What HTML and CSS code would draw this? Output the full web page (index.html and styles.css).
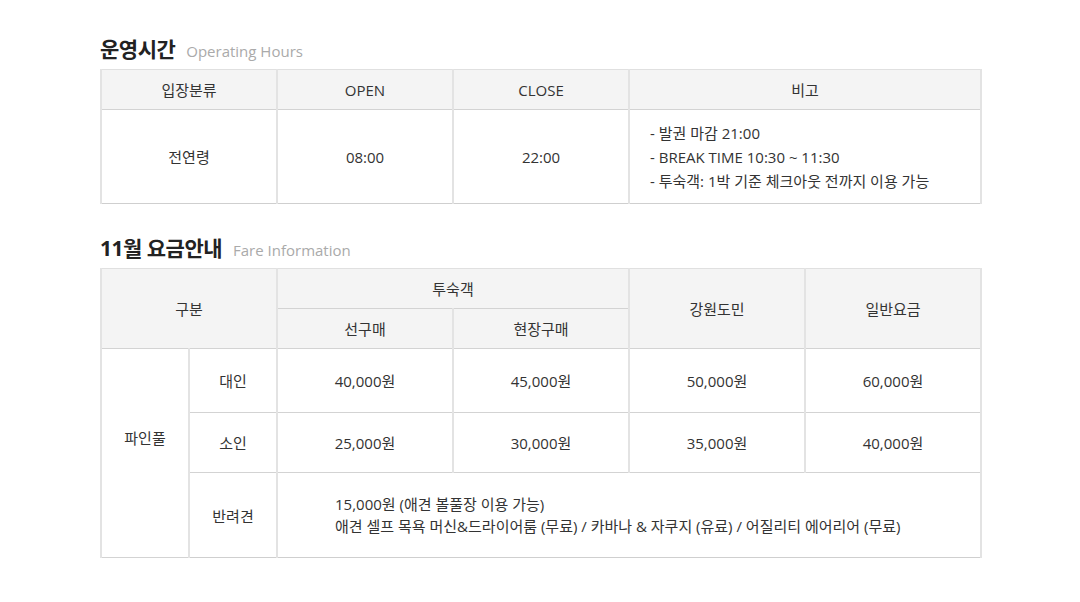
FILE: index.html
```html
<!DOCTYPE html>
<html lang="ko">
<head>
<meta charset="utf-8">
<link rel="stylesheet" href="styles.css">
</head>
<body>
<div class="wrap">
  <h2 class="title">운영시간 <span class="sub">Operating Hours</span></h2>
  <table class="tbl hours">
    <colgroup><col class="c176"><col class="c176"><col class="c176"><col class="c352"></colgroup>
    <thead>
      <tr><th>입장분류</th><th>OPEN</th><th>CLOSE</th><th>비고</th></tr>
    </thead>
    <tbody>
      <tr>
        <td>전연령</td>
        <td>08:00</td>
        <td>22:00</td>
        <td class="notes">
          <p>- 발권 마감 21:00</p>
          <p>- BREAK TIME 10:30 ~ 11:30</p>
          <p>- 투숙객: 1박 기준 체크아웃 전까지 이용 가능</p>
        </td>
      </tr>
    </tbody>
  </table>

  <h2 class="title t2">11월 요금안내 <span class="sub">Fare Information</span></h2>
  <table class="tbl fare">
    <colgroup><col class="c88"><col class="c88"><col class="c176"><col class="c176"><col class="c176"><col class="c176"></colgroup>
    <thead>
      <tr class="h1"><th colspan="2" rowspan="2">구분</th><th colspan="2">투숙객</th><th rowspan="2">강원도민</th><th rowspan="2">일반요금</th></tr>
      <tr class="h2"><th>선구매</th><th>현장구매</th></tr>
    </thead>
    <tbody>
      <tr class="r1"><td rowspan="3" class="pool">파인풀</td><td>대인</td><td>40,000원</td><td>45,000원</td><td>50,000원</td><td>60,000원</td></tr>
      <tr class="r2"><td>소인</td><td>25,000원</td><td>30,000원</td><td>35,000원</td><td>40,000원</td></tr>
      <tr class="r3"><td>반려견</td><td colspan="4" class="pet">
        <p>15,000원 (애견 볼풀장 이용 가능)</p>
        <p>애견 셀프 목욕 머신&amp;드라이어룸 (무료) / 카바나 &amp; 자쿠지 (유료) / 어질리티 에어리어 (무료)</p>
      </td></tr>
    </tbody>
  </table>
</div>
</body>
</html>
```
FILE: styles.css
```css
* { box-sizing: border-box; }
html, body { margin: 0; padding: 0; background: #fff; }
body {
  font-family: "Open Sans", "Noto Sans CJK KR", sans-serif;
  color: #333;
}
.wrap { width: 879px; margin-left: 100px; padding-top: 36px; }
.title {
  margin: 0 0 5px;
  font-size: 21px;
  font-weight: 700;
  color: #222;
  line-height: 26px;
  letter-spacing: -0.5px;
}
.title.t2 { margin-top: 31px; }
.sub {
  font-size: 15px;
  font-weight: 400;
  color: #aaa;
  margin-left: 6px;
  letter-spacing: 0;
}
.tbl {
  width: 879px;
  border-collapse: collapse;
  table-layout: fixed;
  font-size: 15px;
}
.c176 { width: 176px; }
.c352 { width: 352px; }
.c88 { width: 88px; }
.tbl th, .tbl td {
  border-left: 2px solid #e3e3e3;
  border-right: 2px solid #e3e3e3;
  border-top: 1px solid #d3d3d3;
  border-bottom: 1px solid #d3d3d3;
  text-align: center;
  vertical-align: middle;
  padding: 0;
  font-weight: 400;
}
.tbl thead tr:first-child th { border-top: 1px solid #e0e0e0; }
.tbl tbody tr:last-child td { border-bottom: 1px solid #cfcfcf; }
.tbl th { background: #f4f4f4; height: 40px; }
.hours tbody td { height: 94px; }
.notes { text-align: left !important; padding-left: 20px !important; }
.notes p { margin: 0; line-height: 24px; }
.fare .r1 td { height: 64px; }
.fare .r2 td { height: 60px; }
.fare .r3 td { height: 85px; }
.fare td.pool { padding-bottom: 32px; }
.fare td.pet { text-align: left; padding-left: 57px; }
.pet p { margin: 0; line-height: 22px; }
```
